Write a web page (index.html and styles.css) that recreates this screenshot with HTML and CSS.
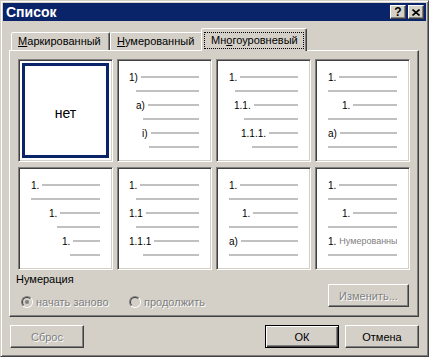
FILE: index.html
```html
<!DOCTYPE html>
<html lang="ru">

<head>
    <meta charset="UTF-8">
    <title>Список</title>
    <link rel="stylesheet" href="styles.css">
</head>

<body>
    <div class="window">
        <div class="titlebar">
            <span class="title">Список</span>
            <div class="caption-btns">
                <span class="cap-btn help">?</span>
                <span class="cap-btn">
                    <svg width="8" height="7" viewBox="0 0 8 7">
                        <path d="M0.5 0.5 L7.5 6.5 M7.5 0.5 L0.5 6.5" stroke="#000" stroke-width="1.6" fill="none"/>
                    </svg>
                </span>
            </div>
        </div>

        <div class="content">
            <!-- вкладки -->
            <div class="tabs">
                <div class="tab tab-1"><u>М</u>аркированный</div>
                <div class="tab tab-2"><u>Н</u>умерованный</div>
                <div class="tab active"><span class="focus">Мн<u>о</u>гоуровневый</span></div>
            </div>

            <div class="panel">
                <div class="presets">
                    <div class="preset selected">
                        <div class="none-box">нет</div>
                    </div>

                    <div class="preset">
                        <div class="item i11"><span>1)</span><i class="rule"></i></div>
                        <div class="line i18"></div>
                        <div class="item i18"><span>a)</span><i class="rule"></i></div>
                        <div class="line i25"></div>
                        <div class="item i24"><span>i)</span><i class="rule"></i></div>
                        <div class="line i31"></div>
                    </div>

                    <div class="preset">
                        <div class="item i12"><span>1.</span><i class="rule"></i></div>
                        <div class="line i18"></div>
                        <div class="item i17"><span>1.1.</span><i class="rule"></i></div>
                        <div class="line i27"></div>
                        <div class="item i24"><span>1.1.1.</span><i class="rule"></i></div>
                        <div class="line i35"></div>
                    </div>

                    <div class="preset">
                        <div class="item i12"><span>1.</span><i class="rule"></i></div>
                        <div class="line i12"></div>
                        <div class="item i26"><span>1.</span><i class="rule"></i></div>
                        <div class="line i12"></div>
                        <div class="item i12"><span>a)</span><i class="rule"></i></div>
                        <div class="line i12"></div>
                    </div>

                    <div class="preset">
                        <div class="item i12"><span>1.</span><i class="rule"></i></div>
                        <div class="line i12"></div>
                        <div class="item i30"><span>1.</span><i class="rule"></i></div>
                        <div class="line i38"></div>
                        <div class="item i43"><span>1.</span><i class="rule"></i></div>
                        <div class="line i51"></div>
                    </div>

                    <div class="preset">
                        <div class="item i11"><span>1.</span><i class="rule"></i></div>
                        <div class="line i18"></div>
                        <div class="item i11"><span>1.1</span><i class="rule"></i></div>
                        <div class="line i18"></div>
                        <div class="item i11"><span>1.1.1</span><i class="rule"></i></div>
                        <div class="line i25"></div>
                    </div>

                    <div class="preset">
                        <div class="item i12"><span>1.</span><i class="rule"></i></div>
                        <div class="line i12"></div>
                        <div class="item i25"><span>1.</span><i class="rule"></i></div>
                        <div class="line i12"></div>
                        <div class="item i12"><span>a)</span><i class="rule"></i></div>
                        <div class="line i12"></div>
                    </div>

                    <div class="preset">
                        <div class="item i12"><span>1.</span><i class="rule"></i></div>
                        <div class="line i12"></div>
                        <div class="item i26"><span>1.</span><i class="rule"></i></div>
                        <div class="line i12"></div>
                        <div class="item i12"><span>1.</span><span class="sample">Нумерованный</span></div>
                        <div class="line i12"></div>
                    </div>
                </div>

                <div class="numbering">
                    <div>
                        <div class="numbering-label">Нумерация</div>
                        <div class="radios">
                            <label class="radio"><span class="radio-box checked"></span><span class="disabled">начать заново</span></label>
                            <label class="radio"><span class="radio-box"></span><span class="disabled">продолжить</span></label>
                        </div>
                    </div>
                    <button class="btn btn-change disabled">Изменить...</button>
                </div>
            </div>

            <div class="footer">
                <button class="btn btn-reset disabled">Сброс</button>
                <div class="footer-right">
                    <button class="btn default">ОК</button>
                    <button class="btn">Отмена</button>
                </div>
            </div>
        </div>
    </div>
</body>

</html>
```

FILE: styles.css
```css
* {
    box-sizing: border-box;
}

body {
    margin: 0;
    font-family: "Liberation Sans", Arial, sans-serif;
    font-size: 11px;
    color: #000;
    background-color: #d4d0c8;
}

.window {
    width: 429px;
    height: 357px;
    background-color: #d4d0c8;
    border: 1px solid;
    border-color: #d4d0c8 #404040 #404040 #d4d0c8;
    box-shadow: inset 1px 1px 0 #fff, inset -1px -1px 0 #808080;
    padding: 2px;
    display: flex;
    flex-direction: column;
}

/* заголовок окна */
.titlebar {
    height: 18px;
    background-color: #0a246a;
    color: #fff;
    display: flex;
    align-items: center;
    justify-content: space-between;
    padding: 0 2px 0 3px;
}

.title {
    font-weight: bold;
    font-size: 14px;
}

.caption-btns {
    display: flex;
    gap: 2px;
}

.cap-btn {
    width: 16px;
    height: 14px;
    background-color: #d4d0c8;
    border: 1px solid;
    border-color: #fff #404040 #404040 #fff;
    box-shadow: inset -1px -1px 0 #808080;
    display: flex;
    align-items: center;
    justify-content: center;
    color: #000;
}

.cap-btn.help {
    font-weight: bold;
    font-size: 12px;
    line-height: 12px;
}

.content {
    flex: 1;
    padding: 7px 7px 0 6px;
    display: flex;
    flex-direction: column;
}

/* вкладки */
.tabs {
    display: flex;
    align-items: flex-end;
    height: 22px;
    padding-left: 2px;
}

.tab {
    height: 18px;
    background-color: #d4d0c8;
    border: 1px solid;
    border-bottom: none;
    border-color: #fff #404040 transparent #fff;
    box-shadow: inset -1px 0 0 #808080;
    border-radius: 2px 2px 0 0;
    padding: 1px 0 0 6px;
    line-height: 14px;
    white-space: nowrap;
}

.tab-1 {
    width: 99px;
}

.tab-2 {
    width: 93px;
}

.tab.active {
    width: 106px;
    height: 23px;
    margin: 0 -2px -1px -2px;
    padding: 3px 0 0 2px;
    position: relative;
    z-index: 1;
}

.focus {
    display: inline-block;
    border: 1px dotted #000;
    padding: 0 5px 0 6px;
    line-height: 15px;
}

.panel {
    border: 1px solid;
    border-color: #fff #404040 #404040 #fff;
    box-shadow: inset -1px -1px 0 #808080;
    padding: 8px 7px 6px 6px;
}

/* образцы списков */
.presets {
    display: grid;
    grid-template-columns: repeat(4, 95px);
    grid-auto-rows: 103px;
    column-gap: 4px;
    row-gap: 5px;
    margin-left: 2px;
}

.preset {
    background-color: #fff;
    border: 1px solid;
    border-color: #808080 #fff #fff #808080;
    box-shadow: inset 1px 1px 0 #404040, inset -1px -1px 0 #d4d0c8;
    padding: 9px 12px 0 0;
    overflow: hidden;
    font-size: 10px;
}

.preset.selected {
    padding: 3px;
}

.none-box {
    height: 100%;
    border: 3px solid #0a246a;
    display: flex;
    align-items: center;
    justify-content: center;
    font-size: 14px;
    padding-top: 4px;
}

.item {
    height: 16px;
    display: flex;
    align-items: center;
    gap: 3px;
    white-space: nowrap;
}

.rule {
    flex: 1;
    height: 2px;
    background-color: #c0c0c0;
}

.line {
    height: 2px;
    margin: 5px 0;
    background-color: #c0c0c0;
}

.sample {
    font-size: 9px;
    color: #808080;
    overflow: hidden;
}

.i11 { margin-left: 11px; }
.i12 { margin-left: 12px; }
.i17 { margin-left: 17px; }
.i18 { margin-left: 18px; }
.i24 { margin-left: 24px; }
.i25 { margin-left: 25px; }
.i26 { margin-left: 26px; }
.i27 { margin-left: 27px; }
.i30 { margin-left: 30px; }
.i31 { margin-left: 31px; }
.i35 { margin-left: 35px; }
.i38 { margin-left: 38px; }
.i43 { margin-left: 43px; }
.i51 { margin-left: 51px; }

/* нумерация */
.numbering {
    display: flex;
    justify-content: space-between;
    align-items: flex-end;
    margin-top: 2px;
}

.numbering-label {
    line-height: 14px;
}

.radios {
    display: flex;
    align-items: center;
    height: 16px;
    margin-top: 8px;
    padding-left: 5px;
}

.radio {
    display: flex;
    align-items: center;
    gap: 3px;
}

.radio:first-child {
    width: 108px;
}

.radio-box {
    width: 12px;
    height: 12px;
    border-radius: 50%;
    border: 1px solid;
    border-color: #808080 #fff #fff #808080;
    position: relative;
}

.radio-box::before {
    content: "";
    position: absolute;
    inset: 0;
    border-radius: 50%;
    border: 1px solid;
    border-color: #404040 #d4d0c8 #d4d0c8 #404040;
    background-color: #d4d0c8;
}

.radio-box.checked::after {
    content: "";
    position: absolute;
    left: 3px;
    top: 3px;
    width: 4px;
    height: 4px;
    border-radius: 50%;
    background-color: #808080;
}

.disabled {
    color: #808080;
    text-shadow: 1px 1px 0 #fff;
}

/* кнопки */
.btn {
    width: 74px;
    height: 23px;
    padding: 0;
    font: inherit;
    color: #000;
    background-color: #d4d0c8;
    border: 1px solid;
    border-color: #fff #404040 #404040 #fff;
    box-shadow: inset -1px -1px 0 #808080;
}

.btn.disabled {
    color: #808080;
}

.btn.default {
    border: 1px solid #000;
    box-shadow: inset 1px 1px 0 #fff, inset -1px -1px 0 #404040, inset -2px -2px 0 #808080;
}

.btn-change {
    width: 81px;
    margin: 0 2px 3px 0;
}

.footer {
    display: flex;
    justify-content: space-between;
    margin-top: 8px;
}

.btn-reset {
    margin-left: 1px;
}

.footer-right {
    display: flex;
    gap: 6px;
}
```
